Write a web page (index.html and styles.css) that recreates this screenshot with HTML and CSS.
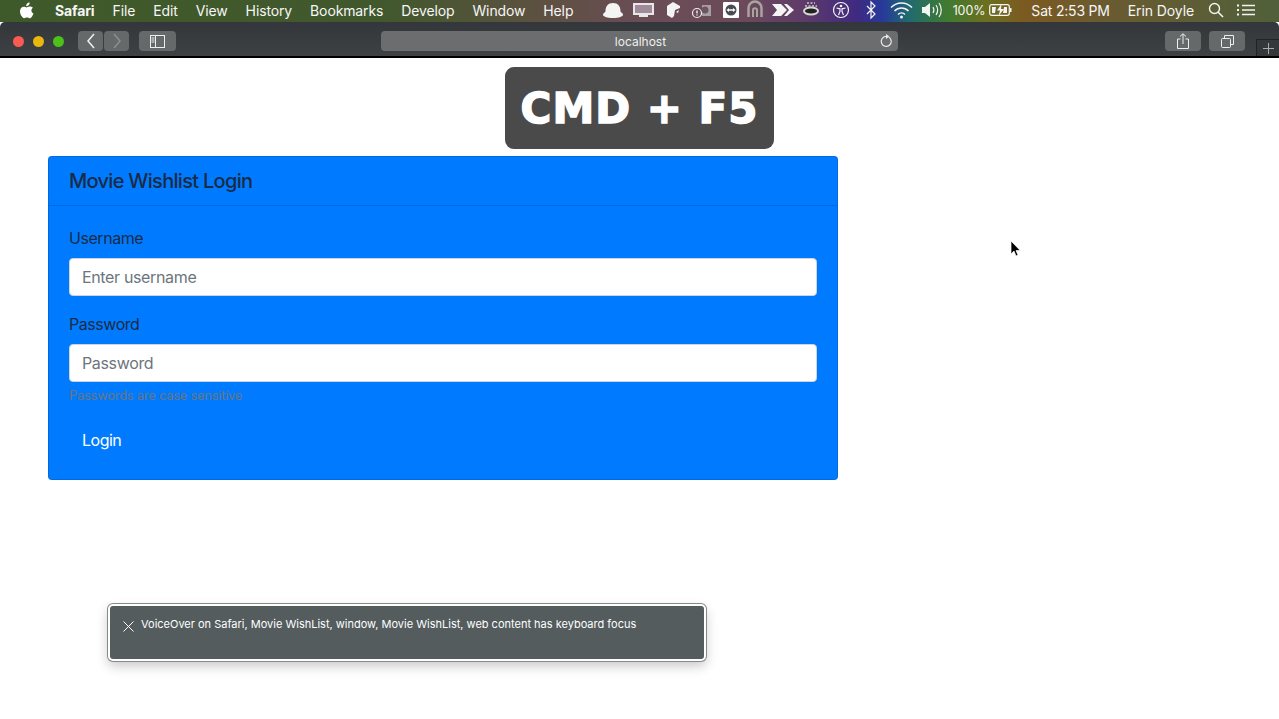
FILE: index.html
```html
<!DOCTYPE html>
<html lang="en">
<head>
  <meta charset="UTF-8" />
  <title>Movie WishList</title>
  <link rel="stylesheet" href="styles.css">
</head>
<body>

  <div class="menubar">
    <svg class="apple" width="14" height="17" viewBox="0 0 14 17">
      <path fill="#fff" d="M9.6 0.4c0.1 1.1-0.3 2-0.9 2.7-0.6 0.7-1.5 1.2-2.5 1.1-0.1-1 0.4-2 0.9-2.6 0.6-0.7 1.6-1.2 2.5-1.2zM13 5.8c-1 0.7-1.6 1.6-1.6 2.8 0 1.4 0.8 2.4 2.1 3-0.3 0.9-0.7 1.700-1.300 2.600-0.800 1.100-1.500 2.100-2.600 2.100-1.100 0-1.400-0.700-2.700-0.700-1.300 0-1.700 0.700-2.700 0.700-1.100 0-1.900-1.100-2.700-2.200C0.500 12.600 0 10.700 0 9.200 0 6.500 1.700 4.700 3.800 4.700c1.100 0 2 0.700 2.700 0.700 0.700 0 1.700-0.800 3-0.800 1.300 0 2.600 0.400 3.500 1.200z"/>
    </svg>
    <nav class="menu">
      <span class="menu-app">Safari</span>
      <span>File</span>
      <span>Edit</span>
      <span>View</span>
      <span>History</span>
      <span>Bookmarks</span>
      <span>Develop</span>
      <span>Window</span>
      <span>Help</span>
    </nav>

    <div class="status">
      <svg class="status-icons" width="345" height="22" viewBox="0 0 345 22">
        <!-- hat / bell -->
        <path fill="#f4f4f4" d="M3 16c0-2 1.500-2 2.500-3.500 0-5.500 2.500-8.500 7.500-8.500s7.500 3 7.500 8.500c1 1.500 2.500 1.500 2.500 3.500 0 1.500-4 3-10 3s-10-1.500-10-3z"/>
        <!-- monitor -->
        <rect x="33" y="4" width="21" height="12" fill="#e8e8e8"/>
        <rect x="35" y="6" width="17" height="8" fill="#a08c98"/>
        <rect x="39" y="16" width="9" height="2" fill="#e8e8e8"/>
        <!-- cube -->
        <path fill="#f4f4f4" d="M73 3l7 4v2l-5 2-1 6-2 2-5-3V7z"/>
        <path fill="#f4f4f4" d="M76 13l3-2-1 3z"/>
        <!-- clock box -->
        <rect x="102" y="6" width="9" height="11" fill="#a8a0a0"/>
        <circle cx="105" cy="11" r="3.500" fill="#6a5560"/>
        <circle cx="97" cy="14" r="4.500" fill="none" stroke="#f0f0f0" stroke-width="1.200"/>
        <path stroke="#f0f0f0" stroke-width="1.400" d="M97 11.500v3M97 15.500v1"/>
        <!-- remote viewer -->
        <rect x="123" y="3" width="16" height="16" rx="1" fill="#fff"/>
        <circle cx="131" cy="11" r="5.500" fill="#4a4a52"/>
        <path fill="#fff" d="M126.500 11l2.500-2v1.200h4V9l2.500 2-2.500 2v-1.200h-4V13z"/>
        <!-- arch -->
        <path fill="none" stroke="#a9a49c" stroke-width="2.500" d="M148.500 18V9c0-3.500 3-6.500 6.500-6.500s6.500 3 6.500 6.500v9"/>
        <path fill="none" stroke="#a9a49c" stroke-width="2" d="M153 18v-7c0-2.500 4-2.500 4 0v7"/>
        <!-- arrows -->
        <path fill="#f4f4f4" d="M172 5h9l6 6-6 6h-9l5-6z"/>
        <path fill="#f4f4f4" d="M184 5h3l7 6-7 6h-3l5-6z"/>
        <!-- coffee -->
        <ellipse cx="211" cy="12" rx="8" ry="4.500" fill="#d8d8d2"/>
        <ellipse cx="211" cy="12" rx="6" ry="2.500" fill="#222"/>
        <path stroke="#c8c8c0" stroke-width="1.500" stroke-dasharray="2 1.500" d="M205 7h12M207 4h8"/>
        <!-- accessibility -->
        <circle cx="241" cy="11" r="7.500" fill="none" stroke="#f4f4f4" stroke-width="1.200"/>
        <circle cx="241" cy="7" r="1.300" fill="#f4f4f4"/>
        <path fill="none" stroke="#f4f4f4" stroke-width="1.200" d="M236.500 9l3.500 0.800v2.700l-1.500 3.500M245.500 9l-3.500 0.800v2.700l1.500 3.500"/>
        <!-- bluetooth -->
        <path fill="none" stroke="#f4f4f4" stroke-width="1.200" d="M267 7l8 8-4 4V3l4 4-8 8"/>
        <!-- wifi -->
        <path fill="none" stroke="#f4f4f4" stroke-width="1.500" d="M291 8.500c6-6 15-6 21 0M294.500 12c4-4 10-4 14 0M298 15.500c2-2 5-2 7 0"/>
        <circle cx="301.500" cy="18" r="1.500" fill="#f4f4f4"/>
        <!-- volume -->
        <path fill="#f4f4f4" d="M322 8h3l5-4v14l-5-4h-3z"/>
        <path fill="none" stroke="#f4f4f4" stroke-width="1.200" d="M333 8c1.200 2 1.200 4 0 6M336 6c2 3 2 7 0 10M339 4c3 4 3 10 0 14"/>
      </svg>
      <span class="battery-pct">100%</span>
      <svg class="battery" width="23" height="14" viewBox="0 0 23 14">
        <rect x="0.700" y="1.700" width="19.600" height="10.600" rx="2" fill="none" stroke="#f4f4f4" stroke-width="1.200"/>
        <rect x="21" y="5" width="1.500" height="4" fill="#f4f4f4"/>
        <path fill="#f4f4f4" d="M3 4h4l-1 6H3zM15 4h3v6h-4z"/>
        <path fill="#f4f4f4" d="M12.500 1L8 7.500h3L9.500 13 15 6h-3z"/>
      </svg>
      <span class="clock">Sat 2:53 PM</span>
      <span class="user">Erin Doyle</span>
      <svg class="search" width="16" height="16" viewBox="0 0 16 16">
        <circle cx="6.500" cy="6.500" r="5" fill="none" stroke="#f4f4f4" stroke-width="1.400"/>
        <path stroke="#f4f4f4" stroke-width="1.600" d="M10.200 10.200L15 15"/>
      </svg>
      <svg class="list" width="18" height="14" viewBox="0 0 18 14">
        <path stroke="#f4f4f4" stroke-width="1.500" d="M5 2.500h13M5 7h13M5 11.500h13"/>
        <path stroke="#f4f4f4" stroke-width="2" d="M0 2.500h2M0 7h2M0 11.500h2"/>
      </svg>
    </div>
  </div>

  <div class="toolbar">
    <div class="lights">
      <span class="light light-red"></span>
      <span class="light light-yellow"></span>
      <span class="light light-green"></span>
    </div>
    <div class="nav-btns">
      <div class="tool-btn nav-btn">
        <svg width="10" height="16" viewBox="0 0 10 16"><path fill="none" stroke="#f0f0f0" stroke-width="1.500" d="M8 1L2 8l6 7"/></svg>
      </div>
      <div class="tool-btn nav-btn">
        <svg width="10" height="16" viewBox="0 0 10 16"><path fill="none" stroke="#8c8e8f" stroke-width="1.500" d="M2 1l6 7-6 7"/></svg>
      </div>
    </div>
    <div class="tool-btn sidebar-btn">
      <svg width="15" height="13" viewBox="0 0 15 13">
        <rect x="0.500" y="0.500" width="14" height="12" fill="none" stroke="#eee"/>
        <path stroke="#eee" d="M5.500 0.500v12"/>
        <path stroke="#eee" d="M1.500 3h3M1.500 5h3M1.500 7h3"/>
      </svg>
    </div>
    <div class="address">
      <span class="address-text">localhost</span>
      <svg class="reload" width="13" height="14" viewBox="0 0 13 14">
        <path fill="none" stroke="#e8e8e8" stroke-width="1.200" d="M9 3.200a5 5 0 1 1-3-0.800"/>
        <path fill="#e8e8e8" d="M6 0l3.500 2.500L6 5z"/>
      </svg>
    </div>
    <div class="tool-right">
      <div class="tool-btn right-btn">
        <svg width="12" height="16" viewBox="0 0 12 16">
          <path fill="none" stroke="#eee" d="M3.500 6H.5v9.500h11V6h-3M6 11V1M3 3.500L6 .7l3 2.800"/>
        </svg>
      </div>
      <div class="tool-btn right-btn">
        <svg width="13" height="13" viewBox="0 0 13 13">
          <rect x="0.500" y="3.500" width="9" height="9" rx="1" fill="none" stroke="#eee"/>
          <path fill="none" stroke="#eee" d="M3.500 3.500V.5h9v9h-3"/>
        </svg>
      </div>
    </div>
    <div class="new-tab">
      <svg width="11" height="11" viewBox="0 0 11 11"><path stroke="#a8aaab" d="M5.500 0v11M0 5.500h11"/></svg>
    </div>
  </div>

  <main class="page">
    <section class="card">
      <h2 class="card-header">Movie Wishlist Login</h2>
      <form class="card-body">
        <div class="form-group">
          <label for="username">Username</label>
          <input id="username" class="form-control" type="text" placeholder="Enter username" />
        </div>
        <div class="form-group">
          <label for="password">Password</label>
          <input id="password" class="form-control" type="password" placeholder="Password" />
          <small class="form-text">Passwords are case sensitive</small>
        </div>
        <button class="btn" type="button">Login</button>
      </form>
    </section>
  </main>

  <div class="keycap">CMD + F5</div>

  <div class="caption">
    <svg class="caption-close" width="11" height="11" viewBox="0 0 11 11">
      <path stroke="#fff" stroke-width="1" d="M0.500 0.500l10 10M10.500 0.500l-10 10"/>
    </svg>
    <span>VoiceOver on Safari, Movie WishList, window, Movie WishList, web content has keyboard focus</span>
  </div>

  <svg class="cursor" width="12" height="18" viewBox="0 0 12 18">
    <path fill="#000" stroke="#fff" stroke-width="0.700" d="M1 1v13l3-3 2 5 2-1-2-4.500h4.200z"/>
  </svg>

</body>
</html>
```

FILE: styles.css
```css
* {
  box-sizing: border-box;
}
html, body {
  margin: 0;
  height: 100%;
  overflow: hidden;
}
body {
  position: relative;
  background: #fff;
  font-family: Inter, "Liberation Sans", sans-serif;
}

/* mac menu bar */
.menubar {
  display: flex;
  align-items: center;
  height: 22px;
  padding: 0 0 2px 20px;
  color: #f6f6f6;
  font-size: 14px;
  letter-spacing: -0.1px;
  background: linear-gradient(90deg, #3f5a2a 0%, #41582c 30%, #5c5140 42%, #6a4d55 50%, #6c4a5a 58%, #5e3a6a 63%, #3f2a80 67%, #27399a 69%, #1f6a70 71%, #3f7a30 74%, #6a7020 77%, #7c5a20 80%, #6b5a30 86%, #50603a 100%);
}
.apple {
  flex: none;
}
.menu {
  display: flex;
  gap: 18px;
  margin-left: 21px;
}
.menu span {
  letter-spacing: -0.13px;
}
.menu .menu-app {
  font-weight: 700;
}
.status {
  display: flex;
  align-items: center;
  margin-left: auto;
  padding-right: 24px;
}
.status-icons {
  display: block;
}
.battery-pct {
  margin-left: 8px;
  font-size: 12.5px;
}
.battery {
  margin-left: 4px;
}
.clock {
  margin-left: 19px;
  letter-spacing: -0.2px;
}
.user {
  margin-left: 18px;
}
.search {
  margin-left: 14px;
}
.list {
  margin-left: 13px;
}

/* safari toolbar */
.toolbar {
  display: flex;
  align-items: center;
  height: 36px;
  padding: 4px 0 0 13px;
  border-bottom: 2px solid #000;
  border-radius: 5px 5px 0 0;
  background: linear-gradient(#33363a, #3e4244);
  color: #f0f0f0;
  position: relative;
}
.lights {
  display: flex;
  gap: 9px;
}
.light {
  width: 11px;
  height: 11px;
  border-radius: 50%;
}
.light-red {
  background: #fb5a52;
}
.light-yellow {
  background: #e9b80f;
}
.light-green {
  background: #4cc11a;
}
.tool-btn {
  display: flex;
  align-items: center;
  justify-content: center;
  height: 20px;
  border-radius: 4px;
  background: #66696a;
}
.nav-btns {
  display: flex;
  gap: 1px;
  margin-left: 14px;
}
.nav-btn {
  width: 25px;
}
.sidebar-btn {
  width: 37px;
  margin-left: 10px;
}
.address {
  position: relative;
  display: flex;
  align-items: center;
  justify-content: center;
  width: 517px;
  height: 20px;
  margin-left: 205px;
  padding-left: 2px;
  border-radius: 4px;
  background: #6b6d6e;
  font-size: 12px;
}
.reload {
  position: absolute;
  right: 5px;
  top: 3px;
}
.tool-right {
  display: flex;
  gap: 8px;
  margin-left: 267px;
}
.right-btn {
  width: 36px;
}
.new-tab {
  position: absolute;
  right: 0;
  bottom: 0;
  display: flex;
  align-items: center;
  justify-content: center;
  width: 23px;
  height: 17px;
  border-left: 1px solid #222;
  border-top: 1px solid #222;
  background: #35383a;
}

/* page content */
.page {
  padding: 98px 0 0 48px;
}
.card {
  width: 790px;
  border: 1px solid rgba(0, 0, 0, 0.125);
  border-radius: 4px;
  background: #007bff;
  color: #1b2b45;
  background-clip: border-box;
}
.card-header {
  margin: 0;
  padding: 12px 20px;
  border-bottom: 1px solid rgba(0, 0, 0, 0.125);
  font-size: 20px;
  font-weight: 500;
  line-height: 24px;
  letter-spacing: -0.7px;
}
.card-body {
  padding: 20px;
}
.form-group {
  margin-bottom: 16px;
}
label {
  display: block;
  margin-bottom: 8px;
  font-size: 16px;
  line-height: 24px;
  letter-spacing: -0.45px;
}
.form-control {
  display: block;
  width: 100%;
  height: 38px;
  padding: 6px 12px;
  border: 1px solid #ced4da;
  border-radius: 4px;
  background: #fff;
  color: #495057;
  font-family: inherit;
  font-size: 16px;
  letter-spacing: -0.35px;
}
.form-control::placeholder {
  color: #6c757d;
  opacity: 1;
}
.form-text {
  display: block;
  margin-top: 4px;
  color: #6c757d;
  font-size: 12.8px;
  line-height: 19px;
  letter-spacing: -0.18px;
}
.btn {
  display: block;
  height: 38px;
  padding: 6px 12px;
  border: 1px solid #007bff;
  border-radius: 4px;
  background: #007bff;
  color: #fff;
  font-family: inherit;
  font-size: 16px;
  letter-spacing: -0.5px;
}

/* overlays */
.keycap {
  position: absolute;
  left: 505px;
  top: 67px;
  width: 269px;
  height: 82px;
  border-radius: 9px;
  background: #4a4a4a;
  color: #fff;
  font-family: "DejaVu Sans", "Liberation Sans", sans-serif;
  font-size: 42px;
  font-weight: 700;
  line-height: 84px;
  letter-spacing: 1px;
  text-align: center;
  -webkit-text-stroke: 1.5px #fff;
}
.caption {
  position: absolute;
  left: 108px;
  top: 604px;
  display: flex;
  gap: 7px;
  width: 598px;
  height: 57px;
  padding: 11px 13px;
  border: 2px solid #fff;
  border-radius: 5px;
  background: #545c5e;
  color: #fff;
  font-size: 11px;
  line-height: 14px;
  box-shadow: 0 0 0 1px #888, 0 5px 12px rgba(0, 0, 0, 0.22);
}
.caption-close {
  flex: none;
  margin-top: 4px;
}
.cursor {
  position: absolute;
  left: 1010px;
  top: 240px;
}
```
